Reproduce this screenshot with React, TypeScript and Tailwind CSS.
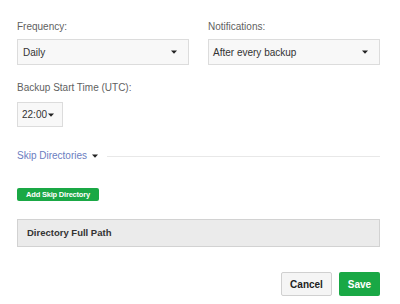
import React from "react";

const Caret = ({ className = "" }: { className?: string }) => (
  <svg width="6" height="4" viewBox="0 0 6 4" className={className}>
    <path d="M0 0.5 L6 0.5 L3 3.8 Z" fill="#222" />
  </svg>
);

export default function App() {
  return (
    <div
      className="w-[400px] h-[304px] bg-white pl-[17px] pr-[20px] pt-[21px] flex flex-col"
      style={{ fontFamily: '"Liberation Sans", Arial, sans-serif' }}
    >
      <div className="grid grid-cols-2 gap-[19px]">
        <div className="flex flex-col">
          <div className="text-[10px] leading-[12px] text-[#5f5f5f]">Frequency:</div>
          <div className="mt-[6px] h-[26px] border border-[#dcdcdc] bg-[#f8f8f8] flex items-center justify-between pl-[5px] pr-[11px]">
            <span className="text-[10px] text-[#333]">Daily</span>
            <Caret />
          </div>
        </div>
        <div className="flex flex-col">
          <div className="text-[10px] leading-[12px] text-[#5f5f5f]">Notifications:</div>
          <div className="mt-[6px] h-[26px] border border-[#dcdcdc] bg-[#f8f8f8] flex items-center justify-between pl-[4px] pr-[11px]">
            <span className="text-[10px] text-[#333]">After every backup</span>
            <Caret />
          </div>
        </div>
      </div>

      <div className="mt-[17px] text-[10px] leading-[12px] text-[#5f5f5f]">Backup Start Time (UTC):</div>
      <div className="mt-[8px] w-[46px] h-[25px] border border-[#dcdcdc] bg-[#f8f8f8] flex items-center pl-[4px] gap-[1px]">
        <span className="text-[10px] text-[#333]">22:00</span>
        <Caret />
      </div>

      <div className="mt-[23px] flex items-center h-[12px]">
        <span className="text-[10px] leading-[12px] text-[#6b7dbf]">Skip Directories</span>
        <Caret className="ml-[5px]" />
        <div className="ml-[9px] flex-1 h-px bg-[#e8e8e8]" />
      </div>

      <div className="mt-[26px] w-[82px] h-[13px] rounded-[2px] bg-[#1aa845] flex items-center justify-center">
        <span className="text-[7.5px] font-bold text-white tracking-[-0.2px]">Add Skip Directory</span>
      </div>

      <div className="mt-[18px] h-[28px] bg-[#ebebeb] border border-[#d2d2d2] flex items-center pl-[9px]">
        <span className="text-[9.5px] font-bold text-[#333]">Directory Full Path</span>
      </div>

      <div className="mt-[25px] flex justify-end gap-[7px]">
        <div className="w-[51px] h-[24px] rounded-[2px] bg-[#f5f5f5] border border-[#d0d0d0] flex items-center justify-center">
          <span className="text-[10px] font-bold text-[#222]">Cancel</span>
        </div>
        <div className="w-[41px] h-[24px] rounded-[2px] bg-[#19a845] flex items-center justify-center">
          <span className="text-[10px] font-bold text-white">Save</span>
        </div>
      </div>
    </div>
  );
}
